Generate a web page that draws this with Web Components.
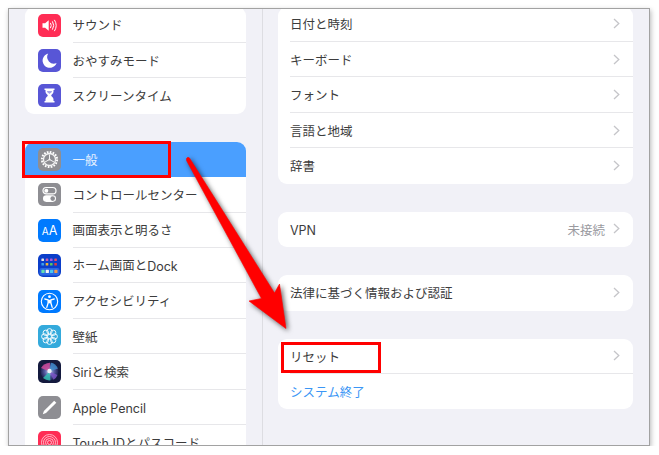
<!DOCTYPE html>
<html lang="ja"><head><meta charset="utf-8"><title>設定</title>
<style>
html,body{margin:0;padding:0;background:#fff}
body{font-family:"Noto Sans CJK JP","Noto Sans",sans-serif}
</style></head><body>
<settings-frame>
  <settings-col slot="left" top="-1.7" style="--pad:16px">
    <settings-card>
      <settings-row icon="sound">サウンド</settings-row>
      <settings-row icon="moon">おやすみモード</settings-row>
      <settings-row icon="hourglass" last>スクリーンタイム</settings-row>
    </settings-card>
    <settings-card gap="28">
      <settings-row icon="gear" selected nosep>一般<red-box slot="box" style="left:-3px;top:-1px;width:149px;height:37px"></red-box></settings-row>
      <settings-row icon="toggles">コントロールセンター</settings-row>
      <settings-row icon="aa">画面表示と明るさ</settings-row>
      <settings-row icon="home">ホーム画面と<span class="l">Dock</span></settings-row>
      <settings-row icon="access">アクセシビリティ</settings-row>
      <settings-row icon="flower">壁紙</settings-row>
      <settings-row icon="siri"><span class="l">Siri</span>と検索</settings-row>
      <settings-row icon="pencil"><span class="l">Apple Pencil</span></settings-row>
      <settings-row icon="touch" last><span class="l">Touch ID</span>とパスコード</settings-row>
    </settings-card>
  </settings-col>
  <settings-col slot="right" top="-2.5" style="--pad:15px;--padr:16px">
    <settings-card>
      <settings-row chevron>日付と時刻</settings-row>
      <settings-row chevron>キーボード</settings-row>
      <settings-row chevron>フォント</settings-row>
      <settings-row chevron>言語と地域</settings-row>
      <settings-row chevron last>辞書</settings-row>
    </settings-card>
    <settings-card gap="28">
      <settings-row chevron value="未接続" last><span class="l">VPN</span></settings-row>
    </settings-card>
    <settings-card gap="28">
      <settings-row chevron last>法律に基づく情報および認証</settings-row>
    </settings-card>
    <settings-card gap="28">
      <settings-row chevron>リセット<red-box slot="box" style="left:3px;top:3px;width:99.5px;height:31.5px"></red-box></settings-row>
      <settings-row last link>システム終了</settings-row>
    </settings-card>
  </settings-col>
  <big-arrow slot="over"></big-arrow>
</settings-frame>
<script>
const ICONS={
sound:`<rect width="23" height="23" rx="5" fill="#ff2d55"/><path d="M4.5 9.2h2.6l3.6-3v10.6l-3.600-3H4.500z" fill="#fff"/><path d="M12.600 9.200q1.500 2.300 0 4.600M14.600 7.700q2.400 3.800 0 7.600M16.600 6.200q3.400 5.300 0 10.600" fill="none" stroke="#fff" stroke-width="1" stroke-linecap="round"/>`,
moon:`<rect width="23" height="23" rx="5" fill="#5856d6"/><path d="M10.200 4.600A7.200 7.200 0 1 0 18.600 14 6.600 6.600 0 0 1 10.200 4.600z" fill="#fff"/>`,
hourglass:`<rect width="23" height="23" rx="5" fill="#5856d6"/><path d="M6.500 4.500h10v1.600h-1v1.600c0 1.800-2.300 2.800-2.300 3.800s2.300 2 2.300 3.800v1.600h1v1.600h-10v-1.600h1v-1.600c0-1.800 2.300-2.800 2.300-3.800S7.500 9.500 7.500 7.700V6.100h-1z" fill="#fff"/><path d="M9 7h5c0 1.300-1.600 2.100-2.500 3C10.600 9.100 9 8.300 9 7z" fill="#5856d6" opacity=".55"/>`,
gear:`<rect width="23" height="23" rx="5" fill="#8e8e93"/><circle cx="11.500" cy="11.500" r="7.600" fill="none" stroke="#fff" stroke-width="2" stroke-dasharray="1.700 1.285"/><circle cx="11.500" cy="11.500" r="6" fill="none" stroke="#f4f4f4" stroke-width="1.300"/><path d="M11.500 11.500V6.500M11.500 11.500l4.500 2.500M11.500 11.500L7 14" stroke="#f4f4f4" stroke-width="1"/><circle cx="11.500" cy="11.500" r="1" fill="#f4f4f4"/>`,
toggles:`<rect width="23" height="23" rx="5" fill="#8e8e93"/><rect x="5" y="4.500" width="13" height="6.400" rx="3.200" fill="none" stroke="#fff" stroke-width="1.200"/><circle cx="8.300" cy="7.700" r="2" fill="#fff"/><rect x="5" y="12.300" width="13" height="6.600" rx="3.300" fill="#fff"/><circle cx="14.700" cy="15.600" r="2.300" fill="#8e8e93"/>`,
aa:`<rect width="23" height="23" rx="5" fill="#007aff"/><text x="11.500" y="16.200" text-anchor="middle" font-family="Inter,'Liberation Sans',sans-serif" fill="#fff"><tspan font-size="10">A</tspan><tspan font-size="12.500">A</tspan></text>`,
home:`<rect width="23" height="23" rx="5" fill="#0b3ec9"/><rect x="1.500" y="14" width="20" height="7.500" rx="2" fill="#2a66e4"/>`+
 [["#e3e3e3","#c85ab5","#a55ae0","#e34d6a"],["#3aa0f0","#f2b430","#5cc560","#e23a3a"],["#65e0b0","#f4f4f4","#4ac8f0","#f09a4a"]].map((r,j)=>r.map((c,i)=>`<rect x="${3.4+i*4.3}" y="${[4.4,9,15.8][j]}" width="${j==2?3.2:2.6}" height="${j==2?3.2:2.6}" rx=".6" fill="${c}"/>`).join("")).join(""),
access:`<rect width="23" height="23" rx="5" fill="#007aff"/><circle cx="11.500" cy="11.500" r="8.200" fill="none" stroke="#fff" stroke-width="1.100"/><circle cx="11.500" cy="6.700" r="1.400" fill="#fff"/><path d="M6.800 9l3.300.8v3.200l-1.300 4.400M16.200 9l-3.300.8v3.200l1.300 4.400" fill="none" stroke="#fff" stroke-width="1.300" stroke-linecap="round" stroke-linejoin="round"/><path d="M10.100 9.800h2.800v3.500h-2.800z" fill="#fff"/>`,
flower:`<rect width="23" height="23" rx="5" fill="#34aadc"/><g fill="none" stroke="#fff" stroke-width=".9"><circle cx="11.500" cy="11.500" r="2.100"/>`+[0,45,90,135,180,225,270,315].map(a=>`<circle cx="${(11.5+5.2*Math.cos(a*Math.PI/180)).toFixed(2)}" cy="${(11.5+5.2*Math.sin(a*Math.PI/180)).toFixed(2)}" r="2.700"/>`).join("")+`</g>`,
siri:`<defs><radialGradient id="sb"><stop offset="0" stop-color="#c8d8ee"/><stop offset=".5" stop-color="#5a5fa8"/><stop offset="1" stop-color="#1d1f50"/></radialGradient></defs><rect width="23" height="23" rx="5" fill="#141a3e"/><circle cx="11.500" cy="11.500" r="9" fill="url(#sb)"/><path d="M11.500 11.500L3 8Q6 3 12 2.800z" fill="#d04a9a" opacity=".85"/><path d="M11.500 11.500L20 8.500Q17.500 3.500 13 2.800z" fill="#3f8fd0" opacity=".8"/><path d="M11.500 11.500L5 18q3.500 2.800 7.500 2.300z" fill="#35c5b5" opacity=".8"/><path d="M11.500 11.500L19.500 15q-1 3-4 4.700z" fill="#7d55c8" opacity=".8"/><circle cx="11.500" cy="11" r="2.200" fill="#eef2fa"/>`,
pencil:`<rect width="23" height="23" rx="5" fill="#8e8e93"/><path d="M16.200 4.700l2.100 2.100L8 17.100l-3.200 1.100 1.100-3.200z" fill="#fff"/>`,
touch:`<rect width="23" height="23" rx="5" fill="#ff2d55"/><g fill="none" stroke="#ffc4d0" stroke-width=".9"><circle cx="11.500" cy="11.500" r="2"/><circle cx="11.500" cy="11.500" r="4"/><circle cx="11.500" cy="11.500" r="6"/><circle cx="11.500" cy="11.500" r="8"/></g>`
};
function def(name,css,html,init){
  customElements.define(name,class extends HTMLElement{
    constructor(){super();this.attachShadow({mode:"open"}).innerHTML=`<style>${css}</style>${html}`;}
    connectedCallback(){init&&init.call(this,this.shadowRoot);}
  });
}
def("settings-frame",`
 :host{display:grid;grid-template-columns:254px 1fr;box-sizing:border-box;width:642px;height:438px;margin:8px 0 0 8px;border:1px solid #a2a2a2;background:#f1f1f7;overflow:hidden;position:relative;box-shadow:1px 2px 5px rgba(0,0,0,.28)}
 .l{border-right:1px solid #dddde2;min-width:0}
 .r{min-width:0}
`,`<div class="l"><slot name="left"></slot></div><div class="r"><slot name="right"></slot></div><slot name="over"></slot>`);
def("settings-col",`:host{display:flex;flex-direction:column;padding:0 var(--padr,var(--pad)) 0 var(--pad);height:100%;box-sizing:border-box}`,`<slot></slot>`,
 function(s){const t=this.getAttribute("top");const f=this.firstElementChild;if(f)f.style.marginTop=t+"px";});
def("settings-card",`:host{display:block;background:#fff;border-radius:9px;flex:none}`,`<slot></slot>`,
 function(){const g=this.getAttribute("gap");if(g)this.style.marginTop=g+"px";});
def("settings-row",`
 :host{display:flex;align-items:center;height:35.45px;position:relative;font-size:12.5px;color:#3c3c3c;line-height:1;--pl:12px}
 :host([selected]){background:#4a9fff;color:#e6f1ff;border-radius:9px 9px 0 0}
 :host([link]){color:#3b96f5}
 .ic{width:23px;height:23px;margin:0 11.5px 0 13px;flex:none;display:none}
 :host([icon]) .ic{display:block}
 .body{flex:1;display:flex;align-items:center;align-self:stretch;min-width:0;box-sizing:border-box;border-bottom:1px solid #e7e7ea;padding-right:13px;white-space:nowrap;margin-left:var(--pl)}
 :host([icon]) .body{margin-left:0}
 :host([last]) .body,:host([nosep]) .body{border-bottom-color:transparent}
 .lab{flex:1;position:relative;top:1px}
 .val{color:#9a9a9f;margin-right:8px;position:relative;top:1px}
 svg.ch{width:7px;height:11px;display:none;flex:none}
 :host([chevron]) svg.ch{display:block}
 ::slotted(.l){font-family:Inter,"Liberation Sans",sans-serif;position:relative;top:.5px}
`,`<svg class="ic" viewBox="0 0 23 23"></svg><div class="body"><span class="lab"><slot></slot></span><span class="val"></span><svg class="ch" viewBox="0 0 7 11"><path d="M1 1l4.800 4.500L1 10" fill="none" stroke="#c5c5c9" stroke-width="1.300"/></svg></div><slot name="box"></slot>`,
 function(s){const n=this.getAttribute("icon");if(n)s.querySelector(".ic").innerHTML=ICONS[n];
  s.querySelector(".val").textContent=this.getAttribute("value")||"";});
def("red-box",`:host{position:absolute;box-sizing:border-box;border:3px solid #f00;display:block;pointer-events:none}`,``);
def("big-arrow",`:host{position:absolute;left:-9px;top:-9px;width:659px;height:455px;display:block;pointer-events:none}
 svg{width:100%;height:100%;overflow:visible;filter:drop-shadow(2px 2px 2.5px rgba(0,0,0,.6))}`,
 `<svg viewBox="0 0 659 455"><path d="M186.500 158.500Q187.800 156.500 189.500 158L274.500 293L279.500 284L286 328.500L249 301L261.500 298.500L186.500 160.500z" fill="#f00" stroke="#f00" stroke-width=".6" stroke-linejoin="round"/></svg>`);
</script>
</body></html>
